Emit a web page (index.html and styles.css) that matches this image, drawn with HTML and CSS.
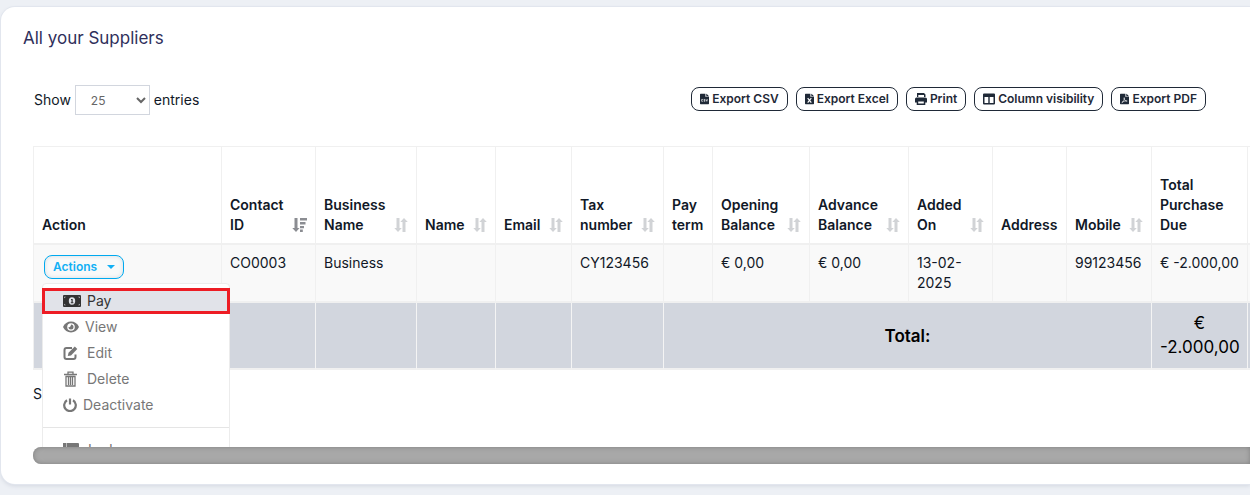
FILE: index.html
```html
<!DOCTYPE html>
<html lang="en">
<head>
<meta charset="utf-8">
<title>Suppliers</title>
<link rel="stylesheet" href="styles.css">
</head>
<body>
<svg class="defs" aria-hidden="true">
  <symbol id="sort" viewBox="0 0 14 16"><path d="M2.500 1h3v10h2.300L4 15 .3 11h2.200zM8.500 15h3V5h2.300L10 1 6.300 5h2.200z"/></symbol>
  <symbol id="sort-desc" viewBox="0 0 15 16"><path d="M2.500 1h3v10h2L4 15 .3 11h2.200zM8 1h7v2.500H8zM8 5h5.500v2.500H8zM8 9h4v2.300H8zM8 12.500h2.800V15H8z"/></symbol>
  <symbol id="file" viewBox="0 0 10 12"><path d="M1 0h5v3.500h4V11a1 1 0 0 1-1 1H1a1 1 0 0 1-1-1V1a1 1 0 0 1 1-1zM7 0l3 3H7z"/></symbol>
</svg>
<main class="card">
  <h1 class="title">All your Suppliers</h1>
  <div class="toolbar">
    <label class="length">Show
      <select class="length-select"><option>25</option></select>
      entries</label>
    <div class="buttons">
      <button class="btn"><svg class="ico-file" viewBox="0 0 10 12"><use href="#file"/><path class="cut" d="M3.300 6.500H1.800v2h1.500M5.800 6.500H4.400v1h1.200v1H4.200M6.800 6.300l.8 2.300.8-2.300"/></svg>Export CSV</button>
      <button class="btn"><svg class="ico-file" viewBox="0 0 10 12"><use href="#file"/><path class="cut bold" d="M3 5l4 5M7 5l-4 5"/></svg>Export Excel</button>
      <button class="btn"><svg class="ico-print" viewBox="0 0 12 12"><path d="M2 0h7l1.500 1.500V5H9V2H3.300v3H2zM1.500 4.500h9A1.500 1.500 0 0 1 12 6v3.500h-1.700V12H1.700V9.500H0V6a1.500 1.500 0 0 1 1.500-1.500zM3.200 8.500v2h5.600v-2z" fill-rule="evenodd"/></svg>Print</button>
      <button class="btn"><svg class="ico-cols" viewBox="0 0 12 12"><path d="M1 .5h10a1 1 0 0 1 1 1v9a1 1 0 0 1-1 1H1a1 1 0 0 1-1-1v-9a1 1 0 0 1 1-1zM1.500 4v6h3.800V4zM6.700 4v6h3.800V4z" fill-rule="evenodd"/></svg>Column visibility</button>
      <button class="btn"><svg class="ico-file" viewBox="0 0 10 12"><use href="#file"/><path class="cut" d="M2 10c2-1 3-3.500 2.700-5.500C4.500 7 6 8.500 8 8.300 6 7.800 4 8.500 2 10"/></svg>Export PDF</button>
    </div>
  </div>
  <div class="scroller">
    <table class="suppliers">
      <colgroup>
        <col class="c-action"><col class="c-contact"><col class="c-business"><col class="c-name"><col class="c-email"><col class="c-tax"><col class="c-term"><col class="c-opening"><col class="c-advance"><col class="c-added"><col class="c-address"><col class="c-mobile"><col class="c-due"><col class="c-rest">
      </colgroup>
      <thead>
        <tr>
          <th>Action</th>
          <th><div class="head">Contact ID<svg class="sort active"><use href="#sort-desc"/></svg></div></th>
          <th><div class="head">Business Name<svg class="sort"><use href="#sort"/></svg></div></th>
          <th><div class="head">Name<svg class="sort"><use href="#sort"/></svg></div></th>
          <th><div class="head">Email<svg class="sort"><use href="#sort"/></svg></div></th>
          <th><div class="head">Tax number<svg class="sort"><use href="#sort"/></svg></div></th>
          <th>Pay term</th>
          <th><div class="head">Opening Balance<svg class="sort"><use href="#sort"/></svg></div></th>
          <th><div class="head">Advance Balance<svg class="sort"><use href="#sort"/></svg></div></th>
          <th><div class="head">Added On<svg class="sort"><use href="#sort"/></svg></div></th>
          <th>Address</th>
          <th><div class="head">Mobile<svg class="sort"><use href="#sort"/></svg></div></th>
          <th>Total Purchase Due</th>
          <th></th>
        </tr>
      </thead>
      <tbody>
        <tr>
          <td>
            <div class="dropdown">
              <button class="actions">Actions<span class="caret"></span></button>
              <ul class="menu">
                <li><a class="item current" href="#pay"><svg class="ico-cash" viewBox="0 0 18 12"><path fill-rule="evenodd" d="M1 0h16a1 1 0 0 1 1 1v10a1 1 0 0 1-1 1H1a1 1 0 0 1-1-1V1a1 1 0 0 1 1-1zM9 2.300a3.200 3.700 0 1 0 0 7.400 3.200 3.700 0 0 0 0-7.400zM1.300 1.800v1.400L2.800 1.800zM16.700 1.800v1.400l-1.500-1.400zM1.300 10.200V8.800l1.500 1.400zM16.700 10.200V8.800l-1.500 1.400z"/><path d="M8 4h1.700v3.300h.7v.9H7.800v-.9h.7V5H8z"/></svg>Pay</a></li>
                <li><a class="item" href="#view"><svg class="ico-eye" viewBox="0 0 16 12"><path fill-rule="evenodd" d="M8 .6c3.500 0 6.500 2 8 5.400-1.500 3.400-4.500 5.400-8 5.400S1.500 9.400 0 6C1.500 2.600 4.500.6 8 .6zM8 2.200a3.800 3.800 0 1 0 0 7.600 3.800 3.800 0 0 0 0-7.600zM8 3.500a2.500 2.500 0 1 1-2.500 2.500c.9.500 2.500-.5 2.500-2.500z"/></svg>View</a></li>
                <li><a class="item" href="#edit"><svg class="ico-edit" viewBox="0 0 14 14"><path d="M8.500 2H3a2 2 0 0 0-2 2v7a2 2 0 0 0 2 2h7a2 2 0 0 0 2-2V8.500" fill="none" stroke="currentColor" stroke-width="2"/><path d="M11.300.5l2.500 2.500L7.500 9.500 4.300 10l.7-3.200z"/></svg>Edit</a></li>
                <li><a class="item" href="#delete"><svg class="ico-trash" viewBox="0 0 14 16"><path d="M.5 3.500h13M4.500 3V1.200h5V3M2 5.500h10M2.500 5v10h9V5M5 6v8M7 6v8M9 6v8" fill="none" stroke="currentColor" stroke-width="1.300"/></svg>Delete</a></li>
                <li><a class="item" href="#deactivate"><svg class="ico-power" viewBox="0 0 14 14"><path d="M4 2.300a5.800 5.800 0 1 0 6 0M7 .5v6" fill="none" stroke="currentColor" stroke-width="2.200"/></svg>Deactivate</a></li>
                <li class="divider"></li>
                <li><a class="item" href="#ledger"><svg class="ico-ledger" viewBox="0 0 16 14"><path d="M0 0h3v14H0zM3.500 0H15a1 1 0 0 1 1 1v13H3.500z"/></svg>Ledger</a></li>
              </ul>
            </div>
          </td>
          <td>CO0003</td><td>Business</td><td></td><td></td><td>CY123456</td><td></td><td>€ 0,00</td><td>€ 0,00</td><td>13-02-2025</td><td></td><td>99123456</td><td>€ -2.000,00</td><td></td>
        </tr>
      </tbody>
      <tfoot>
        <tr>
          <td></td><td></td><td></td><td></td><td></td><td></td>
          <td class="total" colspan="6">Total:</td>
          <td>€ -2.000,00</td><td></td>
        </tr>
      </tfoot>
    </table>
    <p class="info">Showing 1 to 1 of 1 entries</p>
  </div>
  <div class="scrollbar"></div>
</main>
</body>
</html>
```
FILE: styles.css
```css
* { box-sizing: border-box; }
body {
  margin: 0;
  padding: 7px 0 10px 1px;
  background: #edf0f5;
  color: #111827;
  font: 14px/20px Inter, "Liberation Sans", sans-serif;
  overflow: hidden;
}
.defs { position: absolute; width: 0; height: 0; }
svg { fill: currentColor; flex: none; }
.card {
  background: #fff;
  border-radius: 14px 0 0 14px;
  padding: 18px 0 20px;
  box-shadow: 0 0 0 1px #e2e6ee, 0 2px 4px #d3d7e0;
}
.title { margin: 0 0 34px 22px; font-size: 17px; line-height: 26px; font-weight: 400; color: #2f2f5b; }
.toolbar {
  display: flex;
  justify-content: space-between;
  align-items: flex-start;
  padding: 0 44px 0 33px;
  margin-bottom: 31px;
}
.length { display: flex; align-items: center; gap: 4px; }
.length-select {
  width: 75px;
  height: 30px;
  padding: 0 0 0 11px;
  border: 1px solid #d2d6de;
  border-radius: 0;
  background: #fff;
  color: #666;
  font: 12px Inter, sans-serif;
}
.buttons { display: flex; gap: 8px; padding-top: 2px; }
.btn {
  display: flex;
  align-items: center;
  gap: 3px;
  height: 24px;
  padding: 0 8px;
  border: 1px solid #1f2937;
  border-radius: 8px;
  background: #fff;
  color: #1f2937;
  font: 600 12px/16px Inter, sans-serif;
  white-space: nowrap;
}
.ico-file { width: 9px; height: 12px; }
.ico-print, .ico-cols { width: 12px; height: 12px; }
.cut { fill: none; stroke: #fff; stroke-width: 0.7; }
.cut.bold { stroke-width: 1.3; }

.scroller { margin-left: 32px; overflow: hidden; position: relative; padding-bottom: 43px; }
.suppliers { table-layout: fixed; width: 1315px; border-spacing: 0; border-left: 1px solid #f0f0f0; border-top: 1px solid #f0f0f0; }
.c-action { width: 188px; }
.c-contact { width: 94px; }
.c-business { width: 101px; }
.c-name { width: 79px; }
.c-email { width: 76px; }
.c-tax { width: 92px; }
.c-term { width: 49px; }
.c-opening { width: 97px; }
.c-advance { width: 99px; }
.c-added { width: 84px; }
.c-address { width: 74px; }
.c-mobile { width: 85px; }
.c-due { width: 96px; }
.c-rest { width: 100px; }
th, td { padding: 8px; border-right: 1px solid #f0f0f0; border-bottom: 2px solid #f0f0f0; text-align: left; vertical-align: top; }
th { height: 98px; vertical-align: bottom; font-weight: 600; }
.head { display: flex; justify-content: space-between; align-items: flex-end; }
.sort { width: 14px; height: 16px; margin-bottom: 2px; color: #d1d3d6; }
.sort.active { width: 15px; color: #8b8d92; }
tbody td { background: #f9f9f9; }
tfoot td { height: 67px; background: #d2d6de; border-right-color: #f4f4f4; font-size: 17px; line-height: 24px; text-align: center; color: #000; }
tfoot .total { font-weight: 600; vertical-align: middle; }
.info { margin: 14px 0 0; }

.dropdown { position: relative; padding: 2px 0 0 2px; }
.actions {
  display: flex;
  align-items: center;
  gap: 10px;
  height: 24px;
  padding: 0 8px;
  border: 1px solid #00a9ef;
  border-radius: 8px;
  background: #f9f9f9;
  box-shadow: inset 0 0 4px #d5dde2;
  color: #12b0f5;
  font: 600 12px/16px Inter, sans-serif;
}
.caret { border: 4px solid transparent; border-top-color: currentColor; border-bottom: 0; }
.menu {
  position: absolute;
  left: 0;
  top: 30px;
  z-index: 1;
  width: 188px;
  margin: 0;
  padding: 4px 0;
  border: 1px solid #ececec;
  border-radius: 4px;
  background: #fff;
  list-style: none;
}
.item { display: flex; align-items: center; height: 26px; padding: 0 20px; gap: 6px; color: #777; text-decoration: none; }
.item.current { margin: 0 -1px; padding: 0 18px; border: 3px solid #ed1c24; background: #e1e3e9; color: #333; }
.ico-cash { width: 18px; height: 12px; }
.ico-eye { width: 16px; height: 12px; }
.ico-edit { width: 15px; height: 14px; margin-right: 3px; }
.ico-trash { width: 15px; height: 16px; margin-right: 3px; }
.ico-power { width: 14px; height: 14px; }
.ico-ledger { width: 16px; height: 14px; margin-right: 3px; }
.divider { height: 1px; margin: 9px 0; background: #e5e5e5; }
.scrollbar { height: 17px; margin-left: 32px; border-radius: 8px 0 0 8px; background: #a8a8a8; box-shadow: inset 0 0 5px #808080; }
```
